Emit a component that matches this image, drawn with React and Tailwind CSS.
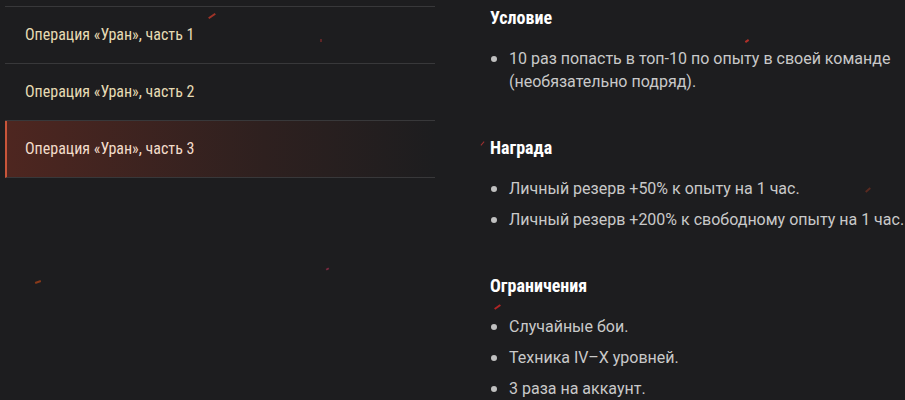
import React from 'react';

const MISSIONS = [
  { label: 'Операция «Уран», часть 1' },
  { label: 'Операция «Уран», часть 2' },
  { label: 'Операция «Уран», часть 3', active: true },
];

const SECTIONS = [
  {
    title: 'Условие',
    items: ['10 раз попасть в топ-10 по опыту в своей команде (необязательно подряд).'],
  },
  {
    title: 'Награда',
    items: ['Личный резерв +50% к опыту на 1 час.', 'Личный резерв +200% к свободному опыту на 1 час.'],
  },
  {
    title: 'Ограничения',
    items: ['Случайные бои.', 'Техника IV–X уровней.', '3 раза на аккаунт.'],
  },
];

const cond = { fontFamily: '"Roboto Condensed", Roboto, sans-serif', fontStretch: 'condensed' };

export default function App() {
  return (
    <div className="relative w-[905px] h-[400px] overflow-hidden bg-[#1d1d1f] flex" style={{ fontFamily: 'Roboto, "Liberation Sans", sans-serif' }}>
      <div className="w-[430px] ml-[5px] pt-[6px] shrink-0">
        <div className="border-t border-[#38383a]">
          {MISSIONS.map(m => (
            <div
              key={m.label}
              className={
                'h-[57px] flex items-center border-b border-[#38383a] text-[16px] ' +
                (m.active
                  ? 'border-l-2 border-l-[#c8553a] pl-[18px] bg-linear-to-r from-[#4e2620] via-[#2e201f] via-60% to-[#1d1d1f] text-[#f2dccb]'
                  : 'pl-5 text-[#e6dbb4]')
              }
              style={cond}
            >
              {m.label}
            </div>
          ))}
        </div>
      </div>

      <div className="ml-[55px] pt-[7px] flex flex-col gap-[44px]">
        {SECTIONS.map(s => (
          <div key={s.title}>
            <h3 className="text-[18px] font-bold text-white leading-[22px]" style={cond}>{s.title}</h3>
            <ul className="mt-[18px] flex flex-col gap-[8px]">
              {s.items.map(it => (
                <li key={it} className="flex text-[16px] leading-[23px] text-[#c9c9c9]">
                  <span className="w-[6px] h-[6px] rounded-full bg-[#c0c0c0] mt-[9px] ml-[1px] mr-[12px] shrink-0" />
                  <span>{it}</span>
                </li>
              ))}
            </ul>
          </div>
        ))}
      </div>

      {/* decorative sparks */}
      <span className="absolute left-[208px] top-[15px] w-[8px] h-[2px] bg-[#c0392b] -rotate-[35deg] opacity-80" />
      <span className="absolute left-[320px] top-[39px] w-[2px] h-[3px] bg-[#7a2a2a] opacity-70" />
      <span className="absolute left-[745px] top-[40px] w-[4px] h-[2px] bg-[#b0302a] -rotate-[35deg]" />
      <span className="absolute left-[35px] top-[281px] w-[6px] h-[2px] bg-[#8a3a1a] -rotate-[20deg]" />
      <span className="absolute left-[326px] top-[268px] w-[3px] h-[2px] bg-[#7a2a40] -rotate-[30deg]" />
      <span className="absolute left-[480px] top-[143px] w-[5px] h-[1px] bg-[#a03030] -rotate-[50deg]" />
      <span className="absolute left-[865px] top-[189px] w-[6px] h-[2px] bg-[#5a2a20] -rotate-[40deg]" />
      <span className="absolute left-[494px] top-[306px] w-[7px] h-[2px] bg-[#b02525] -rotate-[35deg]" />
    </div>
  );
}
